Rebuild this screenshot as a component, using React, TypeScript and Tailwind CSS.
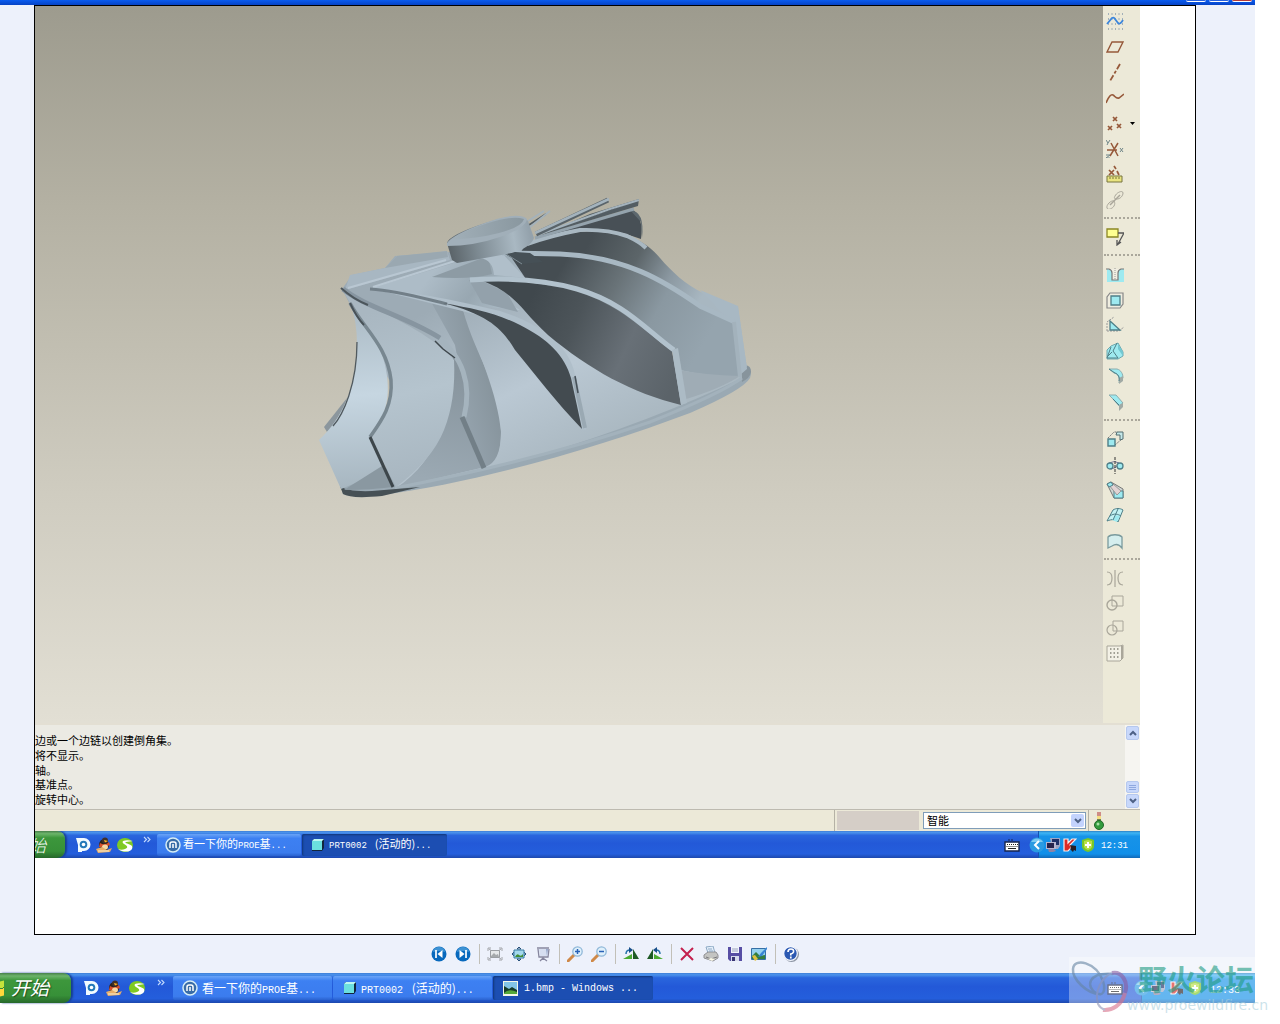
import React from "react";

const CJK = "font-['Noto_Sans_CJK_SC',sans-serif]";

function Mono({ children, small = false }: { children: React.ReactNode; small?: boolean }) {
  return (
    <span
      className={
        small
          ? "font-['Liberation_Mono','Noto_Sans_CJK_SC',monospace] text-[9px] whitespace-pre"
          : "font-['Liberation_Mono','Noto_Sans_CJK_SC',monospace] text-[10px] whitespace-pre"
      }
    >
      {children}
    </span>
  );
}

function Icon({ children, className = "h-[18px] w-[18px]", box = 18 }: { children: React.ReactNode; className?: string; box?: number }) {
  return (
    <svg viewBox={`0 0 ${box} ${box}`} className={`block shrink-0 ${className}`} fill="none" aria-hidden="true">
      {children}
    </svg>
  );
}

/* ---------- feature toolbar icons ---------- */

const BR = "#96593a";
const TL = "#4f7f88";
const CY = "#9eeaf0";
const GR = "#a9a69a";

type Tool = { name: string; art: React.ReactNode; menu?: boolean };

const datumTools: Tool[] = [
  {
    name: "草绘",
    art: (
      <>
        <path d="M2 2h15M2 7h15M2 12h15M2 17h15" stroke="#5a7898" strokeWidth="1" strokeDasharray="1 2.5" />
        <path d="M1 12l5-6q2-1 3 1l3 4q2 2 5-3" stroke="#3c86dc" strokeWidth="1.8" />
      </>
    ),
  },
  { name: "基准平面", art: <path d="M6 4h11l-5 10H1z" stroke={BR} strokeWidth="1.4" /> },
  { name: "基准轴", art: <path d="M14 1L4 18" stroke={BR} strokeWidth="1.8" strokeDasharray="6 2 3 2" /> },
  { name: "基准曲线", art: <path d="M0 14C3 7 5 5 7 6s3 4 6 3l5-4" stroke={BR} strokeWidth="1.6" /> },
  {
    name: "基准点",
    menu: true,
    art: <path d="M7 3l4 4M11 3L7 7M2 12l4 4m0-4l-4 4M11 10l4 4m0-4l-4 4" stroke={BR} strokeWidth="1.7" />,
  },
  {
    name: "坐标系",
    art: (
      <>
        <path d="M1 10h10M4 16l8-13M5 3l7 13" stroke={BR} strokeWidth="1.5" />
        <path d="M0 0l2 3 2-3M2 3L1 5M0 15h4l-4 3h4M14 8l3 4m0-4l-3 4" stroke="#6f8588" />
      </>
    ),
  },
  {
    name: "参照",
    art: (
      <>
        <path d="M3 5l5 5m0-5l-5 5M8 1l2 3M11 6l2 4" stroke={BR} strokeWidth="1.7" />
        <path d="M1 11h15v6H1z" fill="#e9e480" stroke="#77743e" />
        <path d="M4 12v2m3-2v2m3-2v2m3-2v2" stroke="#77743e" />
      </>
    ),
  },
  {
    name: "链接",
    art: (
      <>
        <path d="M9 5c2-4 8-6 8-3s-3 6-6 6-3-1-2-3zM8 10c-3-1-8 4-7 7s6 0 7-2 1-3 0-5z" stroke={GR} />
        <path d="M4 14L14 4" stroke={GR} strokeWidth="1.5" />
      </>
    ),
  },
];

const noteTools: Tool[] = [
  {
    name: "注释",
    art: (
      <>
        <path d="M1 1h11v8H1z" fill="#ffff91" stroke="#8b8724" strokeWidth="1.3" />
        <path d="M12 5h6l-6 11m-1-4v5l4-3" stroke="#555" strokeWidth="1.3" />
      </>
    ),
  },
];

const shapeTools: Tool[] = [
  {
    name: "孔",
    art: (
      <>
        <path d="M1 4h17v13H1z" fill={CY} />
        <path d="M2 4h13q-3 1-3 4v7H6V8q0-3-4-4z" fill="#f1eee2" />
        <path d="M0 4h3q3 1 3 4v7h6V8q0-3 3-4h3" stroke="#777" strokeWidth="1.2" />
        <path d="M9 3v11" stroke="#999" strokeDasharray="1 1" />
      </>
    ),
  },
  {
    name: "壳",
    art: (
      <>
        <path d="M4 2h13v11l-3 4H1V6z" fill="#efede0" stroke="#888" strokeWidth="1.2" />
        <path d="M5 5h9v9H5z" fill={CY} stroke={TL} strokeWidth="1.3" />
      </>
    ),
  },
  {
    name: "筋",
    art: (
      <>
        <path d="M1 15V6l7-5M1 15h12l5-4" stroke="#999" strokeDasharray="2 1" />
        <path d="M4 5v9h10z" fill={CY} stroke={TL} strokeWidth="1.3" />
      </>
    ),
  },
  {
    name: "拔模",
    art: (
      <>
        <path d="M5 4l7-3 5 9v4l-5 3H1V8z" fill={CY} stroke="#6fa8ae" />
        <path d="M5 5L1 16h11M11 1L7 9l5 7M6 10l-4 4" stroke={TL} />
        <path d="M12 2l5 8v4l-5-7z" fill="#73c8d2" />
      </>
    ),
  },
  {
    name: "倒圆角",
    art: (
      <>
        <path d="M3 2h8c4 1 6 5 6 9l-4 5c1-6-1-9-5-10z" fill={CY} stroke="#8cadae" />
        <path d="M13 11l4-2v5l-4 3z" fill="#a1aaa5" />
        <path d="M3 2l6 4c3 1 5 4 4 8" stroke={TL} />
      </>
    ),
  },
  {
    name: "倒角",
    art: (
      <>
        <path d="M3 2h7l7 8-4 3-6-7z" fill={CY} stroke="#8cadae" />
        <path d="M13 12l4-2v4l-4 4z" fill="#a1aaa5" />
        <path d="M7 6l6 6" stroke={TL} />
      </>
    ),
  },
];

const editTools: Tool[] = [
  {
    name: "拉伸",
    art: (
      <>
        <path d="M2 8l6-6h3M9 15l8-7" stroke="#777" strokeDasharray="2 1" />
        <path d="M11 2h6v7l-3 1V5h-4z" fill="#c3e7e8" stroke="#536c70" />
        <path d="M2 9h7v7H2z" fill={CY} stroke={TL} strokeWidth="1.4" />
      </>
    ),
  },
  {
    name: "旋转",
    art: (
      <>
        <path d="M3 7q6-3 10 0M5 13q5 0 8-6" stroke="#779" />
        <circle cx="4" cy="10" r="3" fill={CY} stroke={TL} strokeWidth="1.3" />
        <circle cx="14" cy="10" r="3" fill={CY} stroke={TL} strokeWidth="1.3" />
        <path d="M9 1v17" stroke="#333" strokeDasharray="3 1" />
      </>
    ),
  },
  {
    name: "扫描",
    art: (
      <>
        <path d="M1 3l4-2 12 7v9H8z" fill="#cfd6d3" stroke="#777" />
        <path d="M8 10h9v7H8z" fill={CY} stroke={TL} />
        <path d="M3 4l8 10 4-4L6 2z" fill="#e2d3d4" stroke="#999" />
        <path d="M1 3l4-2 2 3-4 2z" fill={CY} stroke={TL} />
      </>
    ),
  },
  {
    name: "边界混合",
    art: (
      <>
        <path d="M7 3c3-2 7-2 10 0l-5 12c-2-3-6-3-11-1z" fill="#c4f2f3" stroke={TL} />
        <path d="M9 9c3-1 5 0 5 0l-3 6-5-2z" fill={CY} />
        <path d="M4 9c4-3 8-2 11 0M12 2L7 13" stroke={TL} />
      </>
    ),
  },
  {
    name: "造型",
    art: <path d="M2 5c3-3 11-3 14 0v11c-3-4-7-4-10-2l-4 2z" fill="#d5eeee" stroke="#7a9a9d" strokeWidth="1.3" />,
  },
];

const disabledTools: Tool[] = [
  { name: "镜像", art: <path d="M1 3c4 0 5 3 5 6s-1 7-5 7M9 1v17M17 3c-4 0-5 3-5 6s1 7 5 7" stroke={GR} strokeWidth="1.2" /> },
  {
    name: "合并",
    art: (
      <>
        <path d="M6 2h11v10H6z" stroke={GR} />
        <circle cx="6" cy="11" r="5" stroke={GR} strokeWidth="1.400" />
      </>
    ),
  },
  {
    name: "修剪",
    art: (
      <>
        <path d="M7 2h10v10H7z" stroke={GR} />
        <circle cx="6" cy="11" r="5" stroke={GR} strokeWidth="1.200" />
      </>
    ),
  },
  {
    name: "阵列",
    art: (
      <>
        <path d="M1 2h13l3-1v13l-3 3H1z" fill="#f3f1e6" stroke={GR} />
        <path d="M15 2h2v12l-2 2z" fill={GR} />
        <path d="M4 5h9M4 9h9M4 13h9" stroke="#88867b" strokeWidth="1.5" strokeDasharray="1.5 2" />
      </>
    ),
  },
];

function ToolGroup({ tools, className }: { tools: Tool[]; className: string }) {
  return (
    <div className={`flex flex-col justify-between pl-[3px] ${className}`}>
      {tools.map((t) => (
        <button key={t.name} aria-label={t.name} className="flex items-center gap-[6px]">
          <Icon>{t.art}</Icon>
          {t.menu && (
            <Icon box={5} className="h-[5px] w-[5px]">
              <path d="M0 1h5L2.500 4z" fill="#000" />
            </Icon>
          )}
        </button>
      ))}
    </div>
  );
}

function Separator() {
  return <div className="my-2 ml-px h-[3px] border-t-2 border-dotted border-t-[#aaa79b]" />;
}

/* ---------- impeller model ---------- */

function Impeller() {
  return (
    <svg viewBox="35 6 1068 717" preserveAspectRatio="xMinYMin meet" className="block h-full w-[1068px]" aria-label="叶轮模型">
      <defs>
        <linearGradient id="body" x1="470" y1="290" x2="560" y2="470" gradientUnits="userSpaceOnUse">
          <stop offset="0" stopColor="#9dabb5" />
          <stop offset=".55" stopColor="#bac8d3" />
          <stop offset="1" stopColor="#a9b7c0" />
        </linearGradient>
        <linearGradient id="left" x1="355" y1="300" x2="370" y2="490" gradientUnits="userSpaceOnUse">
          <stop offset="0" stopColor="#a9b8c2" />
          <stop offset=".5" stopColor="#c6d6e1" />
          <stop offset="1" stopColor="#a6b5bf" />
        </linearGradient>
        <linearGradient id="mid" x1="380" y1="310" x2="420" y2="480" gradientUnits="userSpaceOnUse">
          <stop offset="0" stopColor="#a9b7c1" />
          <stop offset=".5" stopColor="#b5c4ce" />
          <stop offset="1" stopColor="#a8b6c0" />
        </linearGradient>
        <linearGradient id="cone" x1="460" y1="390" x2="500" y2="380" gradientUnits="userSpaceOnUse">
          <stop offset="0" stopColor="#93a1ab" />
          <stop offset="1" stopColor="#849199" />
        </linearGradient>
        <linearGradient id="channel" x1="455" y1="370" x2="430" y2="480" gradientUnits="userSpaceOnUse">
          <stop offset="0" stopColor="#87949d" />
          <stop offset="1" stopColor="#9ba9b3" />
        </linearGradient>
        <linearGradient id="faceF" x1="590" y1="240" x2="700" y2="300" gradientUnits="userSpaceOnUse">
          <stop offset="0" stopColor="#464e53" />
          <stop offset=".4" stopColor="#5c6569" />
          <stop offset=".7" stopColor="#8b98a1" />
          <stop offset="1" stopColor="#a8b7c1" />
        </linearGradient>
        <linearGradient id="faceE" x1="560" y1="270" x2="700" y2="350" gradientUnits="userSpaceOnUse">
          <stop offset="0" stopColor="#454d52" />
          <stop offset=".35" stopColor="#697378" />
          <stop offset=".65" stopColor="#8a98a1" />
          <stop offset="1" stopColor="#95a4ae" />
        </linearGradient>
        <linearGradient id="faceD" x1="530" y1="300" x2="680" y2="370" gradientUnits="userSpaceOnUse">
          <stop offset="0" stopColor="#40484d" />
          <stop offset=".3" stopColor="#4c5459" />
          <stop offset=".65" stopColor="#687077" />
          <stop offset="1" stopColor="#5b6369" />
        </linearGradient>
        <linearGradient id="hubSide" x1="448" y1="250" x2="530" y2="235" gradientUnits="userSpaceOnUse">
          <stop offset="0" stopColor="#596267" />
          <stop offset=".35" stopColor="#7d8a92" />
          <stop offset=".8" stopColor="#a9b8c2" />
          <stop offset="1" stopColor="#94a2ac" />
        </linearGradient>
        <linearGradient id="hubTop" x1="455" y1="235" x2="525" y2="228" gradientUnits="userSpaceOnUse">
          <stop offset="0" stopColor="#a0aeb7" />
          <stop offset="1" stopColor="#89979f" />
        </linearGradient>
        <linearGradient id="shoulder" x1="440" y1="262" x2="520" y2="320" gradientUnits="userSpaceOnUse">
          <stop offset="0" stopColor="#adbcc7" />
          <stop offset=".45" stopColor="#98a7b1" />
          <stop offset="1" stopColor="#b7c7d2" />
        </linearGradient>
      </defs>

      {/* base disc rim */}
      <path d="M341 487L343 494Q351 498 382 495C480 482 600 447 690 413Q743 390 750 378Q753 370 747 366L600 380Z" fill="#9aa9b3" />
      <path d="M741 366Q751 363 751 372Q750 378 742 382Z" fill="#87949c" />

      {/* cone surface */}
      <path d="M342 289L352 275 385 268 395 256 450 252 530 243 575 290 620 350 740 368 742 378Q650 422 540 455 460 476 395 488L420 440Z" fill="url(#body)" />
      <path d="M455 345L463 390 462 417 485 467Q501 462 501 432C498 395 478 350 463 310L430 300Z" fill="url(#cone)" />
      <path d="M452 350Q468 372 464 416L485 467 396 488C440 460 458 400 452 350Z" fill="url(#channel)" />
      <path d="M463 310C475 355 500 385 501 430Q501 455 495 466C530 458 560 450 584 430L500 325Z" fill="url(#body)" />
      <path d="M395 488Q540 460 650 422 720 394 742 378" stroke="#a3b2bc" strokeWidth="3" fill="none" />
      <path d="M340 486Q347 492 372 491L420 487 382 496Q351 499 343 494Z" fill="#465055" />

      {/* upper left blade tops */}
      <path d="M350 275L385 268 397 256 425 254 447 251 450 260 345 290Z" fill="#a8b7c2" />
      <path d="M385 268L397 256 447 251 448 257Z" fill="#9aa8b1" />
      <path d="M372 288L457 262 530 246 537 270 510 278 470 281 520 310 443 303Z" fill="url(#shoulder)" />
      <path d="M348 288L446 260M373 287L455 261" stroke="#b9c7d2" strokeWidth="2" />
      <path d="M432 277L488 256 492 274Q470 280 432 277Z" fill="#8d9ba4" />
      <path d="M480 258Q493 260 494 275L525 278 503 254Z" fill="#b0bfca" />
      <path d="M469 280L482 303 518 312 507 293 480 280Z" fill="#93a1ab" />

      {/* left blade */}
      <path d="M324 427L347 398 339 422 327 432Z" fill="#8b969d" />
      <path d="M350 303Q357 320 357 345C357 385 343 418 319 440L341 489Q365 480 383 467L370 437C388 415 391 392 385 365 380 340 360 325 350 303Z" fill="url(#left)" />
      <path d="M357 342C357 385 343 415 333 426" stroke="#50595e" strokeWidth="1.300" fill="none" />
      <path d="M344 490L382 466 393 487Q370 490 344 490Z" fill="#8a98a1" />

      {/* second blade */}
      <path d="M342 289Q350 297 367 305C400 320 435 338 454 360Q456 400 444 430 432 460 396 487L370 437C389 417 394 395 389 370 383 340 360 325 350 303Z" fill="url(#mid)" />
      <path d="M350 303C363 328 387 345 391 380 393 405 382 420 370 437" stroke="#788790" strokeWidth="3.500" fill="none" />
      <path d="M350 303Q357 318 364 325" stroke="#485157" strokeWidth="1.800" fill="none" />
      <path d="M370 437L393 487" stroke="#3d464b" strokeWidth="3" />
      <path d="M436 337C463 355 472 385 464 417" stroke="#a5b4be" strokeWidth="5" fill="none" />
      <path d="M343 289C365 307 405 316 440 338" stroke="#8795a0" strokeWidth="5" fill="none" />
      <path d="M341 288Q353 299 368 305" stroke="#4c565c" strokeWidth="2" fill="none" />
      <path d="M435 341L443 349 455 358" stroke="#3f484d" strokeWidth="1.500" fill="none" />
      <path d="M462 417L484 468" stroke="#727f87" strokeWidth="5" />

      {/* small blade */}
      <path d="M370 288C410 291 450 299 500 311 545 325 573 350 576 380L586 430 581 429 555 360 490 318Z" fill="#b0bfca" />
      <path d="M370 289C400 291 425 299 447 304" stroke="#727f88" strokeWidth="3" fill="none" />
      <path d="M443 303C475 309 493 312 520 325 548 339 565 356 571 378L582 429C556 402 535 374 515 350 503 330 490 315 443 303Z" fill="#434b50" />
      <path d="M574 377L585 428" stroke="#9aa9b3" strokeWidth="4" />
      <path d="M575 376l3 17" stroke="#465057" strokeWidth="1.500" />

      {/* long rear blades */}
      <path d="M525 246L553 236Q590 227 627 236C640 240 650 246 660 258 672 272 685 284 703 293L738 307 747 368 735 350 690 311 620 265 520 253Z" fill="url(#faceF)" />
      <path d="M700 290L738 306 747 369 740 375 733 325Z" fill="#a8b8c3" />
      <path d="M509 254L563 255C625 258 663 280 700 307L735 324 740 377Q705 376 680 370L672 350 620 315 550 286 526 279Z" fill="url(#faceE)" />
      <path d="M679 370Q705 375 740 376Q720 389 683 400Z" fill="#9facb5" />
      <path d="M502 253L560 254C625 257 663 280 700 306L735 322" stroke="#a8b8c3" strokeWidth="5" fill="none" />
      <path d="M734 322L740 377" stroke="#a3b2bc" strokeWidth="4" />
      <path d="M480 280Q530 279 575 291C620 305 642 329 672 351L681 405C632 393 590 370 548 335 520 310 517 293 480 280Z" fill="url(#faceD)" />
      <path d="M470 280Q532 276 577 289C625 303 645 329 674 350" stroke="#b2c2cd" strokeWidth="5" fill="none" />
      <path d="M672 350L678 348 687 403 681 405Z" fill="#acbbc5" />

      {/* upper right blades */}
      <path d="M527 244L570 227 632 209Q644 218 641 239L626 234Q590 224 553 235Z" fill="#485056" />
      <path d="M527 244Q553 235 580 230 607 229 627 236 640 242 646 248" stroke="#a9b8c2" strokeWidth="4" fill="none" />
      <path d="M630 210Q645 211 642 238L641 222Z" fill="#5d686e" />
      <path d="M535 238L634 209" stroke="#94a3ad" strokeWidth="3" />
      <path d="M541 235L638 206 639 199 590 214Z" fill="#535d63" />
      <path d="M537 235L610 209 639 200" stroke="#a4b3bd" strokeWidth="2" />
      <path d="M536 234L608 200" stroke="#596369" strokeWidth="5" />
      <path d="M535 233L609 199" stroke="#a4b3bd" strokeWidth="2.500" />
      <path d="M529 225L546 214" stroke="#535c61" strokeWidth="2" />
      <path d="M528 221L544 211M530 227L550 211" stroke="#a4b2bb" strokeWidth="1.800" />
      <path d="M500 251L522 264 543 262 530 253Z" fill="#465056" />
      <path d="M503 252L522 264" stroke="#7f8d95" strokeWidth="1" />

      {/* hub */}
      <path d="M447 243Q449 235 485 223T528 221L534 238Q530 249 507 254L457 263 452 260Z" fill="url(#hubSide)" />
      <path d="M447 243Q452 235 485 223T527 219Q526 228 500 237T447 246Z" fill="#a1afb9" />
      <path d="M452 239Q463 231 488 223T524 219Q522 227 499 233T452 239Z" fill="url(#hubTop)" />
    </svg>
  );
}

/* ---------- taskbar pieces ---------- */

function PIcon() {
  return (
    <Icon box={16} className="h-4 w-4">
      <path d="M1 1h8a6 6 0 0 1 0 13H7v1H3V8z" fill="#f2fbff" />
      <circle cx="8.500" cy="7.500" r="3.800" fill="#2379b9" />
      <circle cx="8.500" cy="7.500" r="1.800" fill="#fff" />
    </Icon>
  );
}

function PenguinIcon() {
  return (
    <Icon box={16} className="h-4 w-4">
      <ellipse cx="8" cy="8" rx="5" ry="6" fill="#28221f" />
      <circle cx="9" cy="3.500" r="3" fill="#40302a" />
      <path d="M8 3l4 1-3 1.500z" fill="#ffb21f" />
      <path d="M4 6q5 3 9-1l1 3-5 2H3z" fill="#d5502c" />
      <ellipse cx="9" cy="10" rx="3" ry="2.500" fill="#f5d8a5" />
      <path d="M0 12l6-2 5 3 5-2-2 4-12 1z" fill="#e8ad68" />
      <path d="M2 14h11" stroke="#f6f0d5" />
    </Icon>
  );
}

function SogouIcon() {
  return (
    <Icon box={16} className="h-4 w-4">
      <ellipse cx="8" cy="8" rx="8" ry="7" fill="#7fca22" />
      <path d="M16 4C8 2 3 4 7 7c3 2 5 3 1 5-2 1-5 1-7 0 7 5 16 2 14-3-1-2-9-3-6-4z" fill="#fff" />
    </Icon>
  );
}

function MaxthonIcon() {
  return (
    <Icon box={16} className="h-4 w-4">
      <circle cx="8" cy="8" r="7" fill="#386ca7" stroke="#d6edf5" strokeWidth="1.500" />
      <path d="M5 11V7q0-2 2-2h2q2 0 2 2v4M8 7v4" stroke="#fff" strokeWidth="1.500" />
    </Icon>
  );
}

function PartIcon() {
  return (
    <Icon box={14} className="h-[14px] w-[14px]">
      <path d="M3 1h10v9l-2 3H1V3z" fill="#12263d" />
      <path d="M1 3h10v9H1z" fill="#6be0df" />
      <path d="M1 3l2-2h10l-2 2z" fill="#bcf8f2" />
    </Icon>
  );
}

function PhotoIcon() {
  return (
    <Icon box={15} className="h-[15px] w-[15px]">
      <path d="M0 0h15v15H0z" fill="#f4f7e8" />
      <path d="M1 1h13v12H1z" fill="#83c5e7" />
      <path d="M1 5l5 3 3-2 5 3v4H1z" fill="#173d2b" />
      <path d="M1 12q5-5 13-1v2H1z" fill="#55a93a" />
    </Icon>
  );
}

function KeyboardIcon() {
  return (
    <Icon box={16} className="h-4 w-4">
      <path d="M4 3h6" stroke="#17254e" strokeDasharray="2 1" />
      <path d="M1 5h14v9H1z" fill="#fff" stroke="#17254e" strokeWidth="1.400" />
      <path d="M3 7.500h11M2.500 9.500h11" stroke="#222" strokeDasharray="1 1" />
      <path d="M4 11.500h8" stroke="#222" />
    </Icon>
  );
}

function TrayArrow() {
  return (
    <Icon box={16} className="h-4 w-4">
      <circle cx="8" cy="8" r="7.500" fill="#2b9be2" />
      <path d="M2 5a7 7 0 0 1 12 0z" fill="#7ccaf1" />
      <path d="M10 4L6 8l4 4" stroke="#fff" strokeWidth="2" />
    </Icon>
  );
}

function NetworkIcon() {
  return (
    <Icon box={16} className="h-4 w-4">
      <path d="M5 1h10v8l-2 3H7z" fill="#9da5c4" />
      <path d="M7 2h7v6H7z" fill="#1d2f68" />
      <path d="M1 5h10v7H1z" fill="#b6b5d0" />
      <path d="M2 6h7v5H2z" fill="#25234c" />
      <path d="M3 12h6l2 2-3 1H4z" fill="#8d83a6" />
    </Icon>
  );
}

function KasperskyIcon() {
  return (
    <Icon box={14} className="h-[14px] w-[14px]">
      <path d="M1 1h4v4l4-4h4L7 7l2 2-4 4H1z" fill="#db2a26" stroke="#f6efee" strokeWidth="1.200" />
      <path d="M7 7l6 1v5l-2-1-1 2-3-3 1-1z" fill="#271f23" />
    </Icon>
  );
}

function ShieldIcon() {
  return (
    <Icon box={14} className="h-[14px] w-[14px]">
      <path d="M7 0l6 2v7q-1 4-6 5-5-1-6-5V2z" fill="#77c829" />
      <path d="M7 2l4 1v6q-1 2-4 3-3-1-4-3V3z" fill="#b8df48" />
      <path d="M7 4v6M4 7h6" stroke="#fff" strokeWidth="2" />
    </Icon>
  );
}

function Chevrons() {
  return (
    <Icon box={8} className="h-2 w-2">
      <path d="M1 1l2.500 2.500L1 6M4.500 1L7 3.500 4.500 6" stroke="#c3dafd" strokeWidth="1.100" />
    </Icon>
  );
}

const barBg = "bg-[linear-gradient(#3f7fd6_0%,#4b93ec_6%,#2a66dd_16%,#2359d8_45%,#245edc_85%,#1d48ad_100%)]";
const trayBg = "bg-[linear-gradient(#2a7fc4_0%,#3fb5f4_7%,#1793e8_20%,#118fe9_85%,#1269b8_100%)]";
const startBg = "bg-[linear-gradient(#47804a_0%,#6cb46a_10%,#3d973c_25%,#379038_75%,#26682a_100%)]";
const taskIdle = "bg-[linear-gradient(#6aa4f6,#3d80f2_20%,#3b7cee_85%,#2a62cf)]";
const taskActive = "bg-[#1c4eb2] shadow-[inset_1px_1px_2px_#123777]";

function InnerTaskbar() {
  return (
    <div className={`flex h-[27px] items-center overflow-hidden text-[11px] text-white ${CJK} ${barBg}`}>
      <button className={`flex h-full w-[30px] shrink-0 items-center overflow-hidden rounded-r-lg text-[17px] italic shadow-[2px_0_2px_#173f93] ${startBg}`}>
        <span className="-ml-[6px] leading-none font-light">始</span>
      </button>
      <div className="ml-[10px] flex items-center gap-[5px]">
        <PIcon />
        <PenguinIcon />
        <SogouIcon />
      </div>
      <span className="mr-[6px] mb-[10px] ml-[10px]">
        <Chevrons />
      </span>
      <div className="flex h-[22px] gap-[1px]">
        <button className={`flex w-[144px] items-center gap-[2px] rounded-[2px] pl-2 ${taskIdle}`}>
          <MaxthonIcon />
          <span className="flex items-baseline">
            看一下你的<Mono small>PROE</Mono>基<Mono small>...</Mono>
          </span>
        </button>
        <button className={`flex w-[145px] items-center gap-1 rounded-[2px] pl-[9px] ${taskActive}`}>
          <PartIcon />
          <span className="flex items-baseline">
            <Mono small>PRT0002 </Mono>
            <span className="whitespace-pre"> (活动的)</span>
            <Mono small>...</Mono>
          </span>
        </button>
      </div>
      <div className="ml-auto flex h-full items-center">
        <KeyboardIcon />
        <div className={`ml-[18px] flex h-full w-[102px] items-center border-l border-[#1553b0] ${trayBg}`}>
          <span className="-ml-[10px]">
            <TrayArrow />
          </span>
          <div className="flex grow items-center gap-[2px]">
            <NetworkIcon />
            <KasperskyIcon />
            <span />
            <ShieldIcon />
            <span className="pl-1">
              <Mono small>12:31</Mono>
            </span>
          </div>
        </div>
      </div>
    </div>
  );
}

function OuterTaskbar() {
  return (
    <div className={`flex h-[30px] items-center text-[12px] text-white ${CJK} ${barBg}`}>
      <button className={`flex h-full w-[71px] shrink-0 items-center gap-[7px] overflow-hidden rounded-r-lg text-[19px] italic shadow-[2px_0_2px_#173f93] ${startBg}`}>
        <span className="h-[15px] w-1 -skew-y-12 bg-[linear-gradient(#c5e33c_45%,#378837_45%,#378837_52%,#ffd83b_52%)]" />
        <span className="mb-1 leading-none [text-shadow:1px_1px_1px_#234f22]">开始</span>
      </button>
      <div className="ml-3 flex items-center gap-[7px]">
        <PIcon />
        <PenguinIcon />
        <SogouIcon />
      </div>
      <span className="mr-[8px] mb-[11px] ml-[12px]">
        <Chevrons />
      </span>
      <div className="flex h-[24px] gap-[1px]">
        <button className={`flex w-[159px] items-center gap-1 rounded-[2px] pl-[9px] ${taskIdle}`}>
          <MaxthonIcon />
          <span className="flex items-baseline">
            看一下你的<Mono>PROE</Mono>基<Mono>...</Mono>
          </span>
        </button>
        <button className={`flex w-[159px] items-center gap-1 rounded-[2px] pl-[10px] ${taskIdle}`}>
          <PartIcon />
          <span className="flex items-baseline">
            <Mono>PRT0002 </Mono>
            <span className="whitespace-pre"> (活动的)</span>
            <Mono>...</Mono>
          </span>
        </button>
        <button className={`flex w-[160px] items-center gap-[6px] rounded-[2px] pl-[10px] ${taskActive}`}>
          <PhotoIcon />
          <Mono>1.bmp - Windows ...</Mono>
        </button>
      </div>
      <div className="ml-auto flex h-full items-center">
        <KeyboardIcon />
        <div className={`ml-[18px] flex h-full w-[114px] items-center border-l border-[#1553b0] ${trayBg}`}>
          <span className="-ml-2">
            <TrayArrow />
          </span>
          <div className="flex grow items-center gap-[4px]">
            <NetworkIcon />
            <KasperskyIcon />
            <ShieldIcon />
            <span className="pl-1">
              <Mono>12:33</Mono>
            </span>
          </div>
        </div>
      </div>
    </div>
  );
}

/* ---------- viewer toolbar ---------- */

const magnifier = (
  <>
    <path d="M1 15l6-6" stroke="#cf8948" strokeWidth="3" strokeLinecap="round" />
    <circle cx="10.500" cy="5.500" r="4.700" fill="#dff0fb" stroke="#90b8d8" strokeWidth="1.300" />
  </>
);

const viewerGroups: Tool[][] = [
  [
    {
      name: "上一个图像",
      art: (
        <>
          <circle cx="8" cy="8" r="7.500" fill="#0869bd" />
          <path d="M2 6a6 5 0 0 1 12 0q-6-2-12 0z" fill="#3d92d4" />
          <path d="M5 4v8" stroke="#fff" strokeWidth="1.700" />
          <path d="M11.500 4v8L6.500 8z" fill="#fff" />
        </>
      ),
    },
    {
      name: "下一个图像",
      art: (
        <>
          <circle cx="8" cy="8" r="7.500" fill="#0869bd" />
          <path d="M2 6a6 5 0 0 1 12 0q-6-2-12 0z" fill="#3d92d4" />
          <path d="M11 4v8" stroke="#fff" strokeWidth="1.700" />
          <path d="M4.500 4v8l5-4z" fill="#fff" />
        </>
      ),
    },
  ],
  [
    {
      name: "最合适",
      art: (
        <>
          <path d="M1 5V2h3m8 0h3v3M1 11v3h3m8 0h3v-3M2 3l3 2m9-2l-3 2M2 13l3-2m9 2l-3-2" stroke="#a2a4a8" />
          <path d="M3.500 4.500h9v7h-9z" fill="#e5e8e9" stroke="#9a9ea2" />
          <path d="M4 10l3-3 2 2 2-1 1 3H4z" fill="#a5a9ab" />
        </>
      ),
    },
    {
      name: "实际大小",
      art: (
        <>
          <path d="M8 1l2 2H6zM8 15l2-2H6zM1 8l2-2v4zM15 8l-2-2v4z" stroke="#27507a" />
          <path d="M3 4h10v8H3z" fill="#a4d9ee" stroke="#367ba2" />
          <path d="M4 11q2-4 4-2t4-1v3z" fill="#418e32" />
        </>
      ),
    },
    {
      name: "幻灯片",
      art: (
        <>
          <path d="M2 2h12M3 3l1 8h9l1-8M8 11v3M5 15l3-3 4 3" stroke="#86869e" strokeWidth="1.300" />
          <path d="M4 3h9l-1 7H5z" fill="#d6def0" />
          <path d="M11 3h2l-1 7z" fill="#94a5c7" />
        </>
      ),
    },
  ],
  [
    { name: "放大", art: <>{magnifier}<path d="M8 5.500h5M10.500 3v5" stroke="#2862b7" strokeWidth="1.500" /></> },
    { name: "缩小", art: <>{magnifier}<path d="M8 5.500h5" stroke="#2862b7" strokeWidth="1.500" /></> },
  ],
  [
    {
      name: "顺时针旋转",
      art: (
        <>
          <path d="M0 13l9-5v5z" fill="#4cab32" />
          <path d="M10 13h6L10 3z" fill="#1e5b25" />
          <path d="M3 8c0-3 2-4 4-4" stroke="#2672a9" strokeWidth="1.500" />
          <path d="M6 1l4 3-4 3z" fill="#174d89" />
        </>
      ),
    },
    {
      name: "逆时针旋转",
      art: (
        <>
          <path d="M16 13L7 8v5z" fill="#4cab32" />
          <path d="M0 13h6V3z" fill="#1e5b25" />
          <path d="M13 8c0-3-2-4-4-4" stroke="#2672a9" strokeWidth="1.500" />
          <path d="M10 1L6 4l4 3z" fill="#174d89" />
        </>
      ),
    },
  ],
  [
    { name: "删除", art: <path d="M2 2l12 12M14 2L2 14" stroke="#c4204d" strokeWidth="2" /> },
    {
      name: "打印",
      art: (
        <>
          <path d="M3 1l7-1 2 7H5z" fill="#e4effb" stroke="#8eaac4" />
          <path d="M1 9l4-3h8l2 3v3l-5 3-9-3z" fill="#c3c4c2" stroke="#8f8f93" />
          <path d="M3 11l5 2 6-2" stroke="#77777b" />
          <path d="M5 13l3-1 4 1-3 2z" fill="#faf9e7" />
          <path d="M5 3h4M6 5h4" stroke="#8eaac4" />
        </>
      ),
    },
    {
      name: "复制到",
      art: (
        <>
          <path d="M1 1h14v14H3l-2-2z" fill="#574ea4" />
          <path d="M4 1h8v6H4z" fill="#f0f4fb" />
          <path d="M5 3h6M5 5h6" stroke="#9ca4bf" />
          <path d="M4 10h8v5H4z" fill="#d7dced" />
          <path d="M5 11h3v4H5z" fill="#383472" />
        </>
      ),
    },
    {
      name: "编辑",
      art: (
        <>
          <path d="M.5 2.500h14v11H.5z" fill="#94d0ee" stroke="#366fa5" />
          <path d="M1 10l4-4 4 4 5-1v4H1z" fill="#347d3f" />
          <path d="M16 1l-6 6-3 4 4-1 5-7z" fill="#3784d4" />
          <path d="M1 10l3 5 3-2-3-4z" fill="#dfc042" />
        </>
      ),
    },
  ],
  [
    {
      name: "帮助",
      art: (
        <>
          <circle cx="8.500" cy="8.500" r="7.500" fill="#8f97a5" />
          <circle cx="7.500" cy="7.500" r="6.800" fill="#2c59b2" stroke="#f5f8ff" strokeWidth="1.200" />
          <path d="M5 6q0-3 3-3t2.500 3Q10 7.500 7.800 8v1.500M7.800 10.500v2" stroke="#fff" strokeWidth="1.700" />
        </>
      ),
    },
  ],
];

function ViewerToolbar() {
  return (
    <div className="flex h-[38px] items-center justify-center">
      {viewerGroups.map((g, i) => (
        <React.Fragment key={i}>
          {i > 0 && (
            <div className="flex w-2 justify-center">
              <div className="h-5 w-px bg-[#c2c0b8]" />
            </div>
          )}
          {g.map((t) => (
            <button key={t.name} aria-label={t.name} className="flex w-6 justify-center">
              <Icon box={16} className="h-4 w-4">{t.art}</Icon>
            </button>
          ))}
        </React.Fragment>
      ))}
    </div>
  );
}

/* ---------- captured application window ---------- */

function ScrollButton({ label, d }: { label: string; d: string }) {
  return (
    <button aria-label={label} className="flex h-[14px] w-[13px] items-center justify-center rounded-[2px] border border-[#b5c8ee] bg-[#c8d8fb]">
      <Icon box={8} className="h-2 w-2">
        <path d={d} stroke="#4d6185" strokeWidth="2" />
      </Icon>
    </button>
  );
}

const messages = ["边或一个边链以创建倒角集。", "将不显示。", "轴。", "基准点。", "旋转中心。"];

function CapturedScreen() {
  return (
    <div className="mr-[55px]">
      <div className="flex h-[717px]">
        <div className="min-w-0 flex-1 overflow-hidden bg-[linear-gradient(#9d9b8e,#b4b1a3_28%,#cfccc0_68%,#e2dfd4)]">
          <Impeller />
        </div>
        <div className="w-[37px] shrink-0 bg-[#ece9d8] pt-[6px]">
          <ToolGroup tools={datumTools} className="h-[197px]" />
          <Separator />
          <ToolGroup tools={noteTools} className="h-[18px]" />
          <Separator />
          <ToolGroup tools={shapeTools} className="h-[146px]" />
          <Separator />
          <ToolGroup tools={editTools} className="h-[120px]" />
          <Separator />
          <ToolGroup tools={disabledTools} className="h-[93px]" />
        </div>
      </div>

      <div className="flex justify-between border-t-2 border-[#e3dfd3] bg-[#ebeae3]">
        <div className={`mt-2 mb-[3px] flex h-[73px] flex-col justify-between text-[11px] leading-[14px] text-black ${CJK}`}>
          {messages.map((m) => (
            <p key={m}>{m}</p>
          ))}
        </div>
        <div className="flex w-[15px] flex-col items-center bg-[#f6f5f1] pt-px pb-[1px]">
          <ScrollButton label="向上滚动" d="M1 6l3-3 3 3" />
          <div className="mt-auto mb-px flex h-[12px] w-[13px] flex-col justify-center gap-px rounded-[2px] border border-[#b5c8ee] bg-[#c8d8fb] px-[2px]">
            <i className="h-px bg-[#8ea8df]" />
            <i className="h-px bg-[#8ea8df]" />
            <i className="h-px bg-[#8ea8df]" />
          </div>
          <ScrollButton label="向下滚动" d="M1 2l3 3 3-3" />
        </div>
      </div>

      <div className="flex h-[22px] items-center justify-end border-t border-[#bdbab0] bg-[#ece9d8]">
        <div className="mr-[2px] h-full w-px bg-[#b5b2a5]" />
        <div className="h-[19px] w-[82px] bg-[#d5cec7]" />
        <div className="relative ml-[4px] w-[163px]">
          <select aria-label="选择过滤器" className={`block h-[17px] w-full appearance-none border border-[#7f9db9] bg-white pl-[3px] text-[11px] leading-[15px] text-black ${CJK}`}>
            <option>智能</option>
          </select>
          <span className="pointer-events-none absolute top-[2px] right-[2px] flex h-[13px] w-[13px] items-center justify-center rounded-[2px] bg-[#c3d3fd]">
            <Icon box={8} className="h-2 w-2">
              <path d="M1 2l3 3 3-3" stroke="#4d6185" strokeWidth="2" />
            </Icon>
          </span>
        </div>
        <div className="ml-[2px] h-full w-px bg-[#b5b2a5]" />
        <div className="flex w-[51px] pl-[2px]">
          <Icon>
            <path d="M6 0h4v4H6z" fill="#cf8c85" />
            <path d="M6 4h4v3H6z" fill="#f5df82" />
            <path d="M6 7h4v4H6z" fill="#738052" />
            <circle cx="8" cy="13" r="4.500" fill="#329b3d" stroke="#236829" />
            <circle cx="7" cy="12" r="1.500" fill="#a9e1a7" />
          </Icon>
        </div>
      </div>

      <InnerTaskbar />
    </div>
  );
}

function Watermark() {
  return (
    <div className="pointer-events-none absolute -right-[25px] -bottom-[15px] h-[61px] w-[211px] bg-white/35">
      <svg viewBox="0 0 60 61" className="absolute top-0 left-0 h-[61px] w-[60px] opacity-60" fill="none" aria-hidden="true">
        <path d="M31 37C18 37 3 22 4 12 5 0 27 5 34 24 37 34 34 40 27 36 17 30 18 15 44 17" stroke="#6685a3" strokeWidth="2.500" />
        <path d="M43 16C52 14 60 24 56 36" stroke="#8a5ca0" strokeWidth="4" />
        <path d="M56 36C53 48 43 54 34 53" stroke="#d8708a" strokeWidth="4" />
        <path d="M43 16C33 20 25 34 29 47Q31 51 36 53" stroke="#8e93b5" strokeWidth="2" />
      </svg>
      <p className={`absolute top-0 left-[69px] text-[29px] leading-[42px] font-bold whitespace-nowrap text-[#1d9a80]/60 ${CJK}`}>野火论坛</p>
      <p className="absolute top-[39px] left-[58px] font-['DejaVu_Sans',sans-serif] text-[14px] leading-[18px] whitespace-nowrap text-[#a9cfdc]/60">www.proewildfire.cn</p>
    </div>
  );
}

export default function App() {
  return (
    <div className="min-h-screen overflow-hidden bg-white pr-[25px] pb-[21px]">
      <div className="relative bg-[#edf1fb]">
        <div className="flex h-[5px] items-start justify-end gap-[3px] bg-[linear-gradient(#0a5cf0,#0643c5)] pr-[3px]">
          <button aria-label="最小化" className="h-[2px] w-5 rounded-b border-b border-white bg-[#2861dd]" />
          <button aria-label="最大化" className="h-[2px] w-5 rounded-b border-b border-white bg-[#2861dd]" />
          <button aria-label="关闭" className="h-[2px] w-5 rounded-b border-b border-white bg-[#b53b36]" />
        </div>
        <main className="mr-[59px] ml-[34px]">
          <div className="border border-black bg-white pb-[76px]">
            <CapturedScreen />
          </div>
          <ViewerToolbar />
        </main>
        <OuterTaskbar />
        <Watermark />
      </div>
    </div>
  );
}
